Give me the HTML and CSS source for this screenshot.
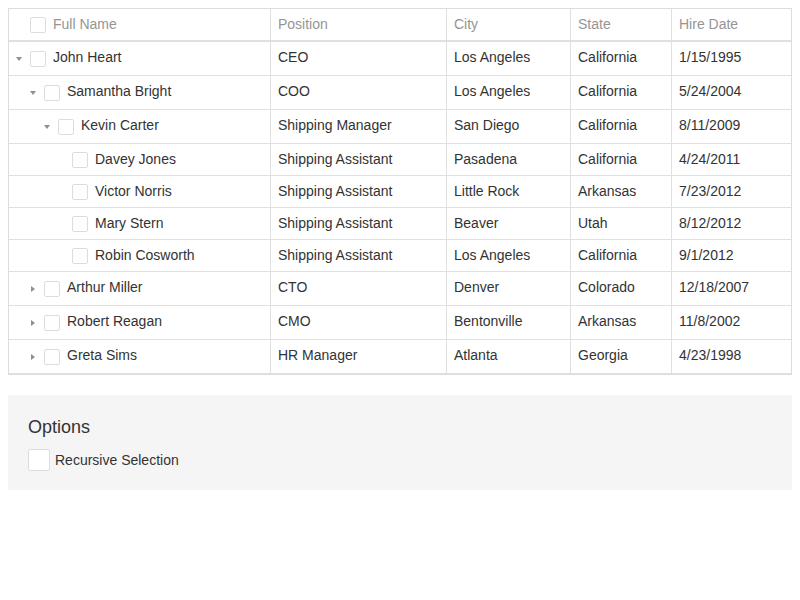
FILE: index.html
```html
<!DOCTYPE html>
<html>
<head>
<meta charset="utf-8">
<link rel="stylesheet" href="styles.css">
</head>
<body>
<div class="grid">
  <div class="row head">
    <div class="cell name"><span class="exp"></span><span class="cb"></span><span class="txt">Full Name</span></div>
    <div class="cell">Position</div>
    <div class="cell">City</div>
    <div class="cell">State</div>
    <div class="cell last">Hire Date</div>
  </div>
  <div class="row">
    <div class="cell name"><span class="exp"><i class="down"></i></span><span class="cb"></span><span class="txt">John Heart</span></div>
    <div class="cell">CEO</div><div class="cell">Los Angeles</div><div class="cell">California</div><div class="cell last">1/15/1995</div>
  </div>
  <div class="row">
    <div class="cell name"><span class="ind l1"></span><span class="exp"><i class="down"></i></span><span class="cb"></span><span class="txt">Samantha Bright</span></div>
    <div class="cell">COO</div><div class="cell">Los Angeles</div><div class="cell">California</div><div class="cell last">5/24/2004</div>
  </div>
  <div class="row">
    <div class="cell name"><span class="ind l2"></span><span class="exp"><i class="down"></i></span><span class="cb"></span><span class="txt">Kevin Carter</span></div>
    <div class="cell">Shipping Manager</div><div class="cell">San Diego</div><div class="cell">California</div><div class="cell last">8/11/2009</div>
  </div>
  <div class="row short">
    <div class="cell name"><span class="ind l3"></span><span class="exp"></span><span class="cb"></span><span class="txt">Davey Jones</span></div>
    <div class="cell">Shipping Assistant</div><div class="cell">Pasadena</div><div class="cell">California</div><div class="cell last">4/24/2011</div>
  </div>
  <div class="row short">
    <div class="cell name"><span class="ind l3"></span><span class="exp"></span><span class="cb"></span><span class="txt">Victor Norris</span></div>
    <div class="cell">Shipping Assistant</div><div class="cell">Little Rock</div><div class="cell">Arkansas</div><div class="cell last">7/23/2012</div>
  </div>
  <div class="row short">
    <div class="cell name"><span class="ind l3"></span><span class="exp"></span><span class="cb"></span><span class="txt">Mary Stern</span></div>
    <div class="cell">Shipping Assistant</div><div class="cell">Beaver</div><div class="cell">Utah</div><div class="cell last">8/12/2012</div>
  </div>
  <div class="row short">
    <div class="cell name"><span class="ind l3"></span><span class="exp"></span><span class="cb"></span><span class="txt">Robin Cosworth</span></div>
    <div class="cell">Shipping Assistant</div><div class="cell">Los Angeles</div><div class="cell">California</div><div class="cell last">9/1/2012</div>
  </div>
  <div class="row">
    <div class="cell name"><span class="ind l1"></span><span class="exp"><i class="right"></i></span><span class="cb"></span><span class="txt">Arthur Miller</span></div>
    <div class="cell">CTO</div><div class="cell">Denver</div><div class="cell">Colorado</div><div class="cell last">12/18/2007</div>
  </div>
  <div class="row">
    <div class="cell name"><span class="ind l1"></span><span class="exp"><i class="right"></i></span><span class="cb"></span><span class="txt">Robert Reagan</span></div>
    <div class="cell">CMO</div><div class="cell">Bentonville</div><div class="cell">Arkansas</div><div class="cell last">11/8/2002</div>
  </div>
  <div class="row">
    <div class="cell name"><span class="ind l1"></span><span class="exp"><i class="right"></i></span><span class="cb"></span><span class="txt">Greta Sims</span></div>
    <div class="cell">HR Manager</div><div class="cell">Atlanta</div><div class="cell">Georgia</div><div class="cell last">4/23/1998</div>
  </div>
</div>

<div class="options">
  <div class="caption">Options</div>
  <div class="option"><span class="cb big"></span><span class="label">Recursive Selection</span></div>
</div>
</body>
</html>
```

FILE: styles.css
```css
html, body {
  margin: 0;
  padding: 0;
  background: #fff;
}
body {
  padding: 8px;
  font-family: "Liberation Sans", Arial, Helvetica, sans-serif;
  font-size: 14px;
  line-height: 20px;
  color: #333;
}
.grid {
  width: 784px;
  box-sizing: border-box;
  border: 1px solid #ddd;
}
.row {
  display: grid;
  grid-template-columns: 262px 176px 124px 101px 1fr;
  height: 34px;
  box-sizing: border-box;
  border-bottom: 1px solid #e0e0e0;
}
.row.short {
  height: 32px;
}
.row.head {
  height: 33px;
  border-bottom: 2px solid #e0e0e0;
  color: #959595;
}
.cell {
  box-sizing: border-box;
  border-right: 1px solid #e0e0e0;
  padding: 5px 7px 0 7px;
  white-space: nowrap;
  overflow: hidden;
}
.cell.last {
  border-right: none;
}
.cell.name {
  display: flex;
  align-items: flex-start;
  padding-left: 6px;
}
.ind.l1 { width: 14px; flex: none; }
.ind.l2 { width: 28px; flex: none; }
.ind.l3 { width: 42px; flex: none; }
.exp {
  flex: none;
  width: 15px;
  height: 23px;
  display: flex;
  align-items: center;
}
.down {
  display: block;
  margin-left: 1px;
  width: 0;
  height: 0;
  border-left: 3.5px solid transparent;
  border-right: 3.5px solid transparent;
  border-top: 4px solid #8f8f8f;
}
.right {
  display: block;
  margin-left: 2px;
  width: 0;
  height: 0;
  border-top: 3.5px solid transparent;
  border-bottom: 3.5px solid transparent;
  border-left: 4px solid #8f8f8f;
}
.cb {
  flex: none;
  width: 16px;
  height: 16px;
  box-sizing: border-box;
  border: 1px solid #ddd;
  border-radius: 2px;
  background: #fff;
  margin-top: 4px;
}
.head .cb, .short .cb {
  margin-top: 3px;
}
.txt {
  margin-left: 7px;
}
.options {
  margin-top: 20px;
  width: 784px;
  box-sizing: border-box;
  background: #f5f5f5;
  padding: 20px 20px 19px 20px;
}
.caption {
  font-size: 18px;
  line-height: 24px;
  color: #333;
}
.option {
  margin-top: 10px;
  display: flex;
  align-items: center;
}
.cb.big {
  width: 22px;
  height: 22px;
  margin-top: 0;
}
.label {
  margin-left: 5px;
}
```
